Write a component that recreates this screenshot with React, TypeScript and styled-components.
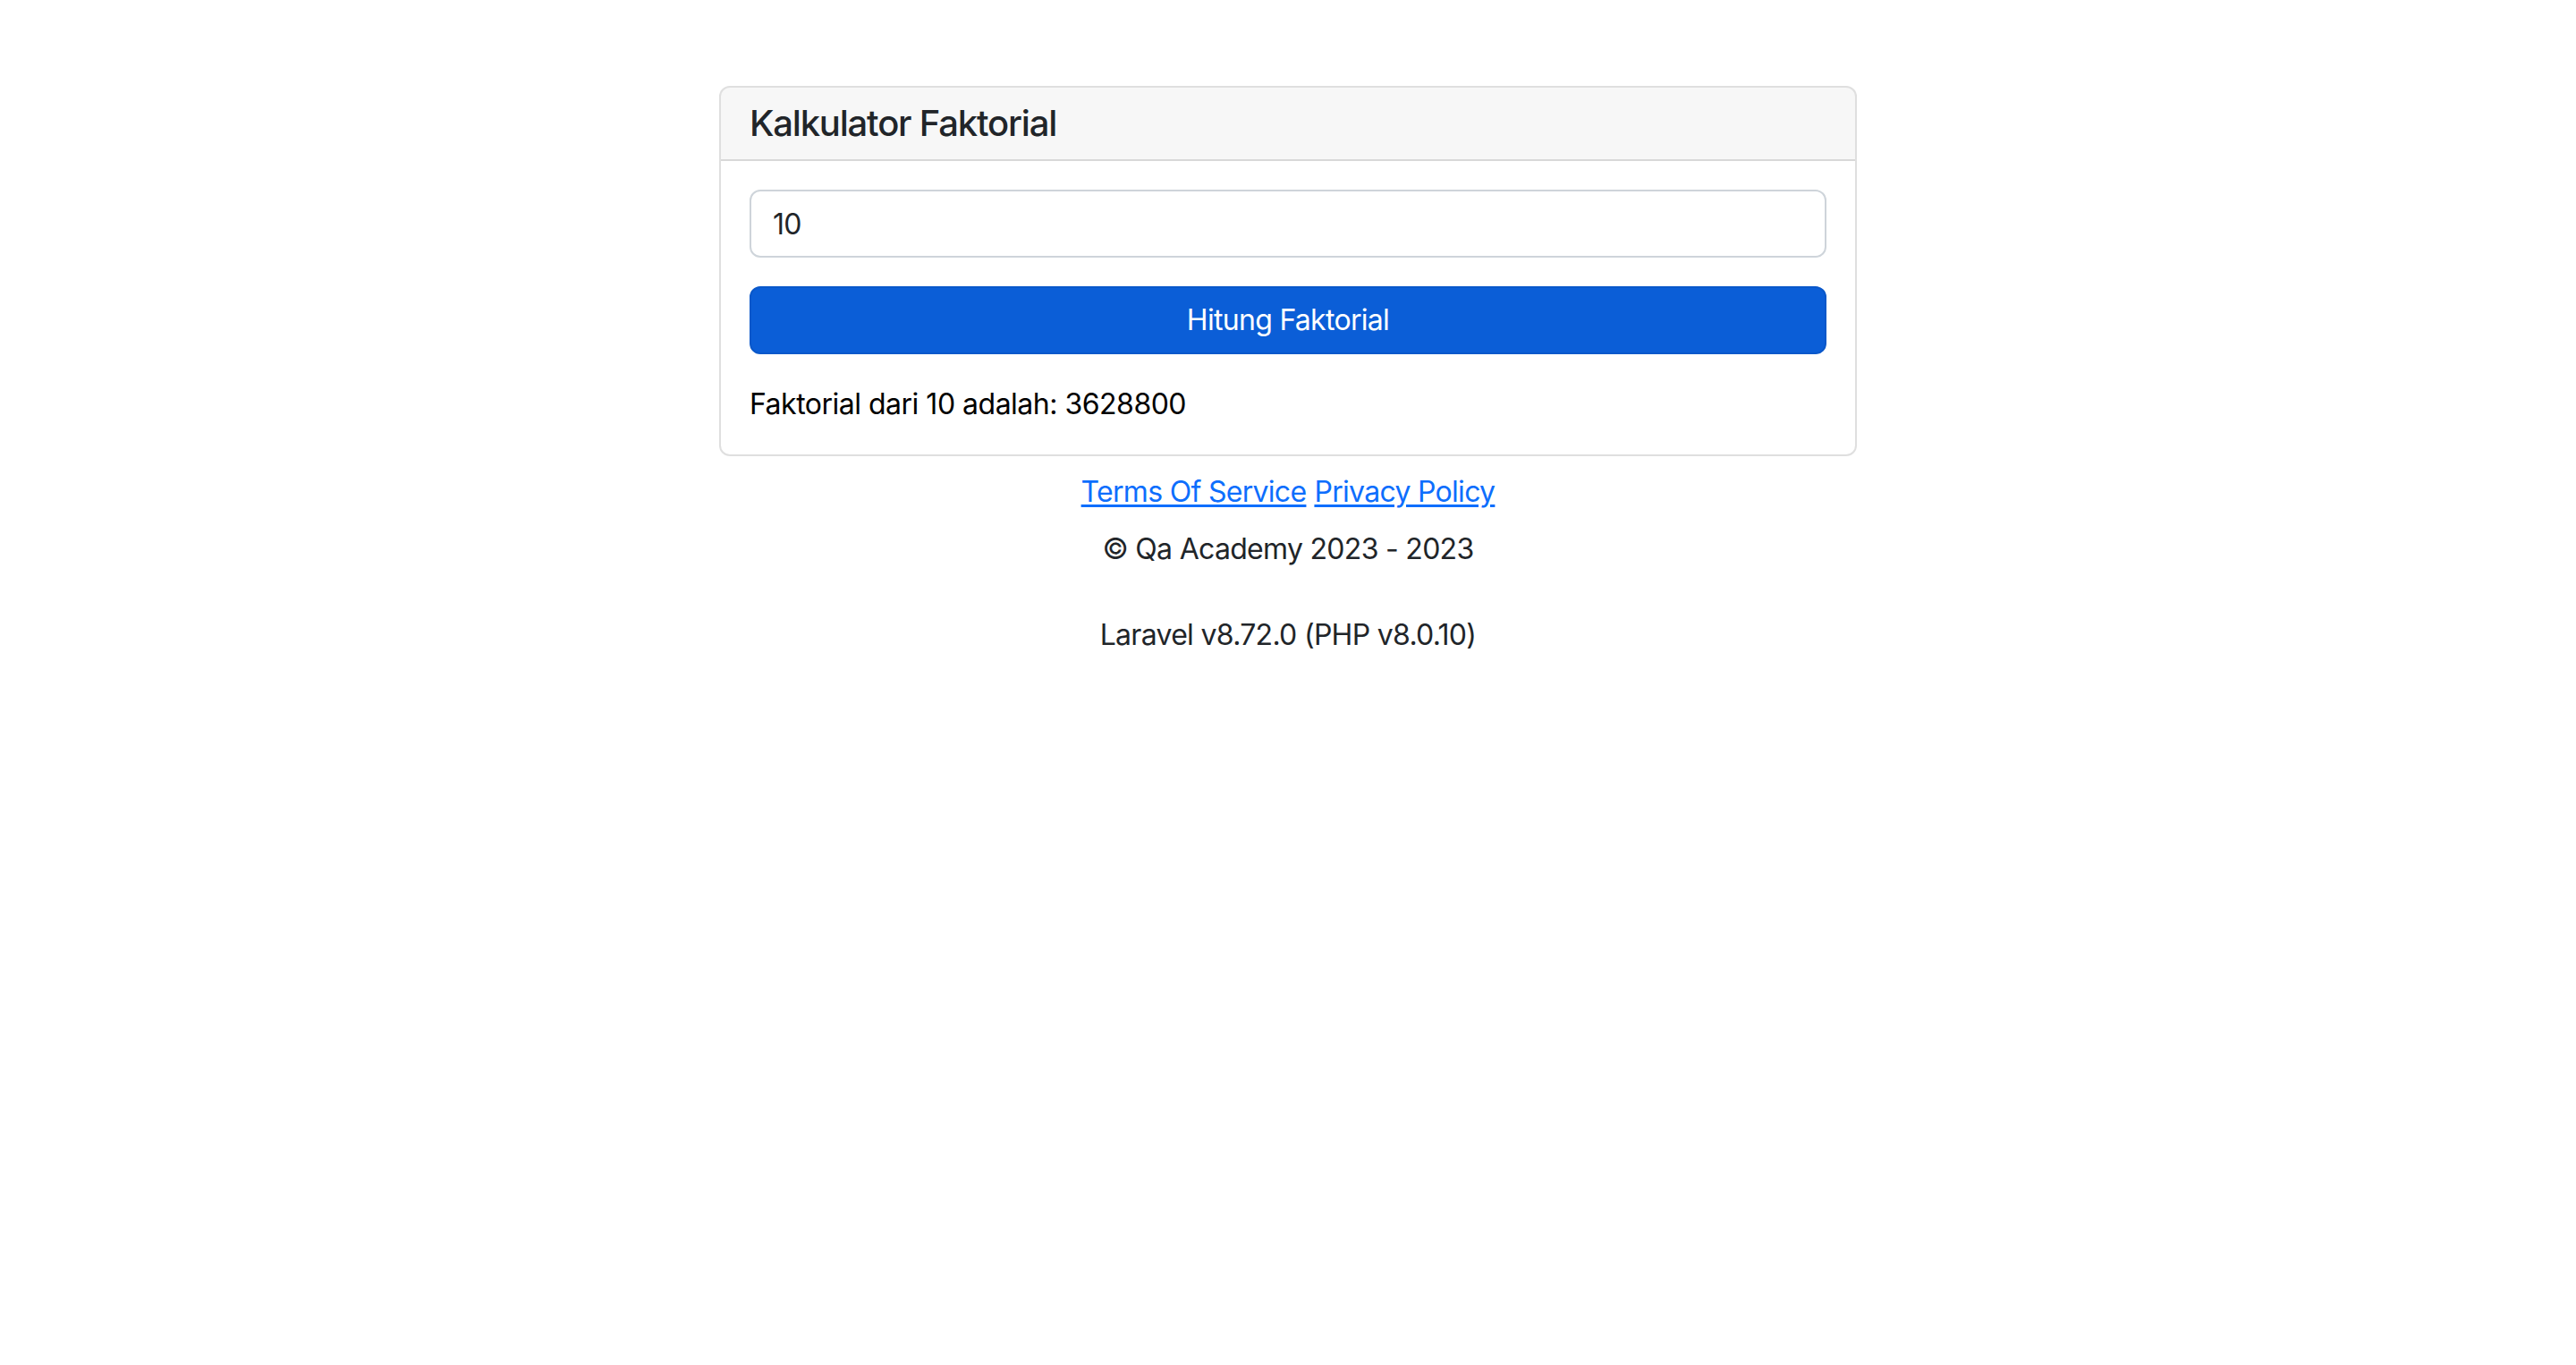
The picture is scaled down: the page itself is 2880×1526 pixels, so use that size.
import React, { useState } from 'react';
import styled, { createGlobalStyle } from 'styled-components';

const GlobalStyle = createGlobalStyle`
    html, body {
        margin: 0;
        padding: 0;
        background: #fff;
    }
    body {
        font-family: Inter, "Noto Sans", "Liberation Sans", sans-serif;
        font-size: 32px;
        line-height: 1.5;
        letter-spacing: -0.7px;
        color: #212529;
    }
    * {
        box-sizing: border-box;
    }
`;

const Page = styled.div`
    display: flex;
    flex-direction: column;
    align-items: center;
    padding-top: 96px;
`;

const Card = styled.div`
    width: 1272px;
    border: 2px solid rgba(0, 0, 0, 0.125);
    border-radius: 12px;
    overflow: hidden;
    background: #fff;
`;

const CardHeader = styled.div`
    padding: 16px 32px;
    background: rgba(0, 0, 0, 0.03);
    border-bottom: 2px solid rgba(0, 0, 0, 0.125);
`;

const Title = styled.h5`
    margin: 0;
    font-size: 40px;
    font-weight: 500;
    line-height: 1.2;
    letter-spacing: -1.2px;
    color: #212529;
`;

const CardBody = styled.div`
    display: flex;
    flex-direction: column;
    gap: 32px;
    padding: 32px;
`;

const NumberInput = styled.input`
    display: block;
    width: 100%;
    height: 76px;
    padding: 12px 24px;
    font-family: inherit;
    font-size: 32px;
    line-height: 1.5;
    letter-spacing: inherit;
    color: #212529;
    border: 2px solid #ced4da;
    border-radius: 12px;
    outline: none;
    background: #fff;
`;

const SubmitButton = styled.button`
    display: block;
    width: 100%;
    height: 76px;
    padding: 12px 24px;
    font-family: inherit;
    font-size: 32px;
    line-height: 1.5;
    letter-spacing: inherit;
    color: #fff;
    background: #0b5ed7;
    border: 2px solid #0a58ca;
    border-radius: 12px;
    cursor: pointer;
`;

const Result = styled.p`
    margin: 0;
    color: #000;
    line-height: 48px;
    letter-spacing: -0.5px;
`;

const Footer = styled.div`
    display: flex;
    flex-direction: column;
    align-items: center;
    margin-top: 16px;
    line-height: 48px;
`;

const Links = styled.div`
    display: flex;
    gap: 9px;
`;

const FooterLink = styled.a`
    color: #0d6efd;
    text-decoration: underline;
    text-underline-offset: 3px;
`;

interface LineProps {
    gapTop: number;
}

const FooterLine = styled.div<LineProps>`
    margin-top: ${props => props.gapTop}px;
    color: #212529;
`;

const factorial = (n: number): number => (n <= 1 ? 1 : n * factorial(n - 1));

const App: React.FunctionComponent = () => {
    const [value, setValue] = useState('10');
    const [result] = useState(() => factorial(10));

    return (
        <>
            <GlobalStyle />
            <Page>
                <Card>
                    <CardHeader>
                        <Title>Kalkulator Faktorial</Title>
                    </CardHeader>
                    <CardBody>
                        <NumberInput type="number" value={value} onChange={e => setValue(e.target.value)} />
                        <SubmitButton type="button">Hitung Faktorial</SubmitButton>
                        <Result>{`Faktorial dari 10 adalah: ${result}`}</Result>
                    </CardBody>
                </Card>
                <Footer>
                    <Links>
                        <FooterLink href="#">Terms Of Service</FooterLink>
                        <FooterLink href="#">Privacy Policy</FooterLink>
                    </Links>
                    <FooterLine gapTop={16}>© Qa Academy 2023 - 2023</FooterLine>
                    <FooterLine gapTop={48}>Laravel v8.72.0 (PHP v8.0.10)</FooterLine>
                </Footer>
            </Page>
        </>
    );
};

export default App;
